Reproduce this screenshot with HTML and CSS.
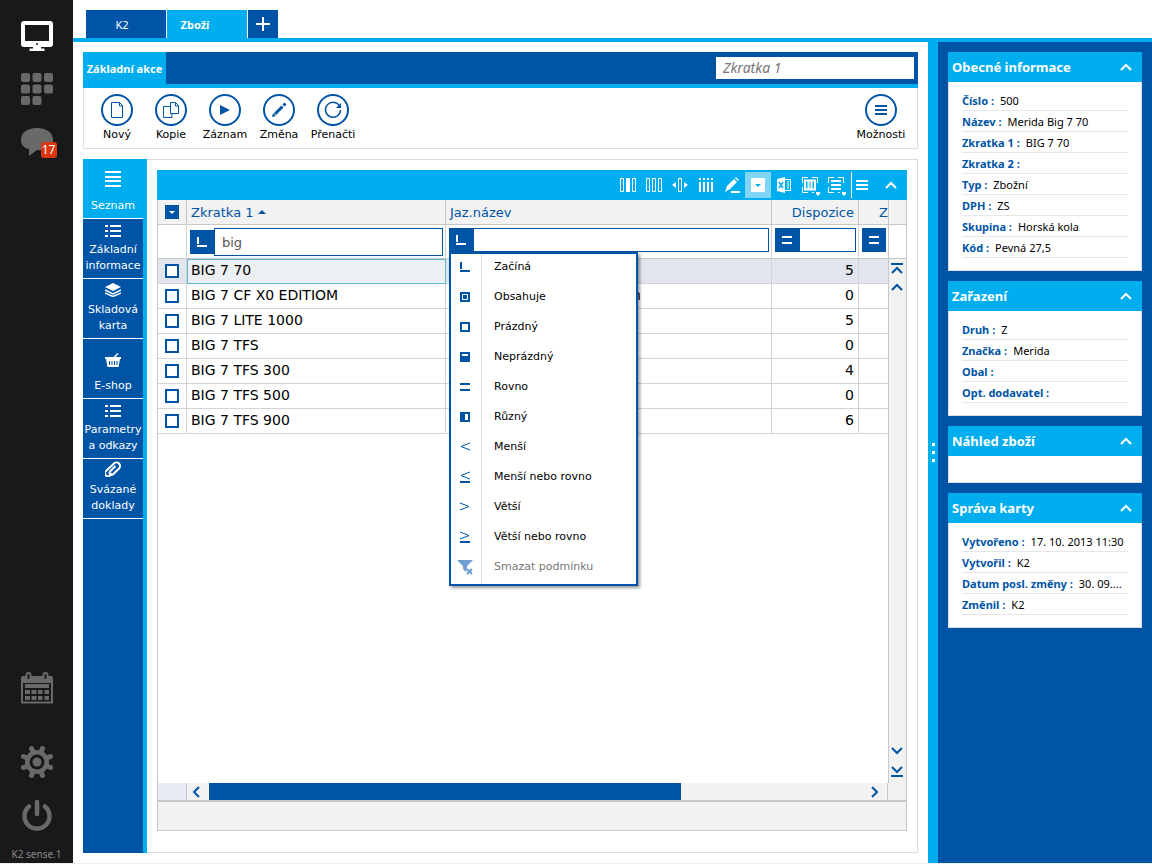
FILE: index.html
```html
<!DOCTYPE html>
<html lang="cs">
<head>
<meta charset="utf-8">
<title>K2 – Zboží</title>
<link rel="stylesheet" href="styles.css">
</head>
<body>
<svg class="defs" aria-hidden="true">
  <symbol id="up" viewBox="0 0 12 8"><path d="M1 7l5-5 5 5" fill="none" stroke="currentColor" stroke-width="2"/></symbol>
  <symbol id="down" viewBox="0 0 12 8"><path d="M1 1l5 5 5-5" fill="none" stroke="currentColor" stroke-width="2"/></symbol>
  <symbol id="list" viewBox="0 0 16 12"><path d="M0 1h3M5 1h11M0 6h3M5 6h11M0 11h3M5 11h11" stroke="currentColor" stroke-width="2"/></symbol>
  <symbol id="begins" viewBox="0 0 10 10"><path d="M1 0v7M0 9h10" fill="none" stroke="currentColor" stroke-width="2"/></symbol>
  <symbol id="equals" viewBox="0 0 10 10"><path d="M0 2h10M0 8h10" stroke="currentColor" stroke-width="2"/></symbol>
</svg>
<div class="app">
  <nav class="rail" aria-label="Hlavní panel">
    <button class="rail-btn on" aria-label="Plocha"><svg viewBox="0 0 32 32"><path fill-rule="evenodd" fill="currentColor" d="M3 1h26a3 3 0 0 1 3 3v20a3 3 0 0 1-3 3h-9v1.500h3.500V31h-15v-2.500H12V27H3a3 3 0 0 1-3-3V4a3 3 0 0 1 3-3zM4 5v16h24V5zm12 18a1 1 0 1 0 0 2 1 1 0 0 0 0-2z"/></svg></button>
    <button class="rail-btn" aria-label="Moduly"><svg viewBox="0 0 32 32" fill="currentColor"><rect width="9" height="9" rx="2"/><rect x="11.500" width="9" height="9" rx="2"/><rect x="23" width="9" height="9" rx="2"/><rect y="11.500" width="9" height="9" rx="2"/><rect x="11.500" y="11.500" width="9" height="9" rx="2"/><rect x="23" y="11.500" width="9" height="9" rx="2"/><rect y="23" width="9" height="9" rx="2"/><rect x="11.500" y="23" width="9" height="9" rx="2"/></svg></button>
    <button class="rail-btn" aria-label="Zprávy"><svg viewBox="0 0 32 32"><path fill="currentColor" d="M16 2c9 0 16 4 16 12s-7 11-16 10l-8 6v-7C3 22 0 19 0 14 0 6 7 2 16 2z"/></svg><span class="badge">17</span></button>
    <button class="rail-btn low" aria-label="Kalendář"><svg viewBox="0 0 32 32"><path fill="none" stroke="currentColor" stroke-width="2" d="M1 10h30v20.500H1z"/><path fill="currentColor" d="M0 6a2 2 0 0 1 2-2h28a2 2 0 0 1 2 2v4H0zM4 12h24v4H4zM4 18h5v4H4zM10.500 18h5v4h-5zM17 18h4.500v4H17zM23.500 18H28v4h-4.500zM4 24h5v4H4zM10.500 24h5v4h-5zM17 24h4.500v4H17zM23.500 24H28v4h-4.500z"/><path d="M7.500 5V3M24.500 5V3" stroke="currentColor" stroke-width="6" stroke-linecap="round"/><path d="M7.500 6V3M24.500 6V3" stroke="#191919" stroke-width="2" stroke-linecap="round"/></svg></button>
    <button class="rail-btn gear" aria-label="Nastavení"><svg viewBox="0 0 32 32"><path d="M10.500 2.500l11 27M21.500 2.500l-11 27M2.500 10.500l27 11M2.500 21.500l27-11" stroke="currentColor" stroke-width="5" stroke-linecap="round"/><circle cx="16" cy="16" r="12" fill="currentColor"/><circle cx="16" cy="16" r="7.500" fill="#191919"/><circle cx="16" cy="16" r="4.500" fill="currentColor"/></svg></button>
    <button class="rail-btn" aria-label="Odhlásit"><svg viewBox="0 0 32 32"><path d="M8 7.500a12.500 12.500 0 1 0 16 0M16 3v12" fill="none" stroke="currentColor" stroke-width="4.500" stroke-linecap="round"/></svg></button>
    <span class="rail-label">K2 sense.1</span>
  </nav>

  <div class="main">
    <div class="tabs">
      <button class="tab">K2</button><button class="tab current">Zboží</button><button class="tab add" aria-label="Nová záložka"><svg width="14" height="14" viewBox="0 0 14 14"><path d="M7 0v14M0 7h14" stroke="#fff" stroke-width="2"/></svg></button>
    </div>
    <div class="content">
      <main class="work">
        <section class="ribbon">
          <div class="ribbon-head">
            <button class="ribbon-tab">Základní akce</button>
            <input class="search" type="text" placeholder="Zkratka 1" aria-label="Hledat podle Zkratka 1">
          </div>
          <div class="ribbon-body">
            <button class="action"><span class="ring"><svg viewBox="0 0 32 32"><path d="M10.500 8.500h8l3 3v12h-11zM18.500 9v3h3" fill="none" stroke="currentColor"/></svg></span>Nový</button>
            <button class="action"><span class="ring"><svg viewBox="0 0 32 32"><path d="M15 12.500H8.500v11H17v-4M15.500 8.500h5l3 3v8h-8zM20.500 9v3h3" fill="none" stroke="currentColor"/></svg></span>Kopie</button>
            <button class="action"><span class="ring"><svg viewBox="0 0 32 32"><path d="M11 11l10 5-10 5z" fill="currentColor"/></svg></span>Záznam</button>
            <button class="action"><span class="ring"><svg viewBox="0 0 32 32"><path d="M12 20l7.500-7.500M20.500 11.500l2-2" stroke="currentColor" stroke-width="3"/><path d="M9 23l1-4 3 3z" fill="currentColor"/></svg></span>Změna</button>
            <button class="action"><span class="ring"><svg viewBox="0 0 32 32"><path d="M22.500 12A7.500 7.500 0 1 0 23.500 16" fill="none" stroke="currentColor" stroke-width="1.500"/><path d="M24 9v5h-5z" fill="currentColor"/></svg></span>Přenačti</button>
            <button class="action last"><span class="ring"><svg viewBox="0 0 32 32"><path d="M10 12h12M10 16h12M10 20h12" stroke="currentColor" stroke-width="2"/></svg></span>Možnosti</button>
          </div>
        </section>

        <div class="lower">
          <nav class="side" aria-label="Stránky">
            <button class="side-item current"><svg width="16" height="16" viewBox="0 0 16 16"><path d="M0 1h16M0 6h16M0 10h16M0 15h16" stroke="currentColor" stroke-width="2"/></svg><span>Seznam</span></button>
            <button class="side-item"><svg width="16" height="12"><use href="#list"/></svg><span>Základní informace</span></button>
            <button class="side-item"><svg width="16" height="14" viewBox="0 0 16 14"><path d="M8 0l8 4-8 4-8-4z" fill="currentColor"/><path d="M0 7l8 4 8-4M0 10l8 3.500 8-3.500" fill="none" stroke="currentColor" stroke-width="1.500"/></svg><span>Skladová karta</span></button>
            <button class="side-item single"><svg width="16" height="14" viewBox="0 0 16 14"><path d="M9 4.500L13 .5" stroke="currentColor" stroke-width="1.500"/><path fill="currentColor" fill-rule="evenodd" d="M0 4h16v2h-1l-1.500 8h-11L1 6H0zM4 8v4h1V8zm2.500 0v4h1V8zM9 8v4h1V8zm2.500 0v4h1V8z"/></svg><span>E-shop</span></button>
            <button class="side-item"><svg width="16" height="12"><use href="#list"/></svg><span>Parametry a odkazy</span></button>
            <button class="side-item"><svg width="16" height="16" viewBox="0 0 16 16"><path d="M5 10.500l5.500-5.500M7.500 12.500l-2.500 2a3 3 0 0 1-4-4.500L9 2.500a3.500 3.500 0 0 1 5 5l-5.500 5.500a2 2 0 0 1-3.500-2.500" fill="none" stroke="currentColor" stroke-width="2"/></svg><span>Svázané doklady</span></button>
          </nav>

          <section class="panel">
            <div class="grid">
              <div class="toolbar">
                <button class="tool" aria-label="Sloupce"><svg width="16" height="14" viewBox="0 0 16 14"><path d="M.5.5h3v13h-3zM12.500.5h3v13h-3z" fill="none" stroke="currentColor"/><path d="M6 0h4v14H6z" fill="currentColor"/></svg></button>
                <button class="tool" aria-label="Výběr sloupců"><svg width="16" height="14" viewBox="0 0 16 14"><path d="M.5.5h3v13h-3zM6.500.5h3v13h-3zM12.500.5h3v13h-3z" fill="none" stroke="currentColor"/></svg></button>
                <button class="tool" aria-label="Šířka sloupců"><svg width="16" height="14" viewBox="0 0 16 14"><path d="M6.500.5h3v13h-3z" fill="none" stroke="currentColor"/><path d="M4 4v6L0 7zM12 4v6l4-3z" fill="currentColor"/></svg></button>
                <button class="tool" aria-label="Součty"><svg width="16" height="14" viewBox="0 0 16 14"><path d="M2 0v2M6 0v2M10 0v2M14 0v2M2 4v10M6 4v10M10 4v10M14 4v10" stroke="currentColor" stroke-width="2"/></svg></button>
                <button class="tool" aria-label="Upravit"><svg width="16" height="16" viewBox="0 0 16 16"><path d="M3 9l7-7 3 3-7 7-5 3zM11 1l1-1 3 3-1 1zM7 14h9v2H7z" fill="currentColor"/></svg></button>
                <button class="tool pressed" aria-label="Filtr"><svg width="14" height="14" viewBox="0 0 14 14"><path d="M0 0h14v14H0z" fill="currentColor"/><path d="M4 6h6l-3 3z" fill="#00adef"/></svg></button>
                <button class="tool" aria-label="Export do Excelu"><svg width="16" height="16" viewBox="0 0 16 16"><path d="M1 2l8-2v16l-8-2z" fill="currentColor"/><path d="M3 5l4 6M7 5l-4 6" stroke="#00adef" stroke-width="1.500"/><path d="M9 2.500h5.500v11H9M12 4v8" fill="none" stroke="currentColor"/></svg></button>
                <button class="tool" aria-label="Uložené sloupce"><svg width="20" height="22" viewBox="-2 -3 20 22"><path d="M.5 6V.5H6M10 .5h5.500V6M.5 10v5.500H6M10 15.500h2" fill="none" stroke="currentColor"/><path d="M3 3.500h10v9H3zM6.500 4v8M9.500 4v8" fill="none" stroke="currentColor" stroke-width="2"/><path d="M14 15h4v2l-2 2-2-2z" fill="currentColor"/></svg></button>
                <button class="tool" aria-label="Uložené řádky"><svg width="20" height="22" viewBox="-2 -3 20 22"><path d="M.5 6V.5H6M10 .5h5.500V6M.5 10v5.500H6M10 15.500h2" fill="none" stroke="currentColor"/><path d="M3 4h10M3 8h10M3 12h10" stroke="currentColor" stroke-width="2"/><path d="M14 15h4v2l-2 2-2-2z" fill="currentColor"/></svg></button>
                <button class="tool menu-btn" aria-label="Nabídka"><svg width="12" height="10" viewBox="0 0 12 10"><path d="M0 1h12M0 5h12M0 9h12" stroke="currentColor" stroke-width="2"/></svg></button>
                <button class="tool fold" aria-label="Sbalit"><svg width="12" height="8"><use href="#up"/></svg></button>
              </div>
              <div class="grid-body">
                <div class="table-wrap">
                  <table>
                    <colgroup><col class="c-check"><col class="c-code"><col><col class="c-num"><col class="c-rest"></colgroup>
                    <thead>
                      <tr class="head">
                        <th><button class="pick" aria-label="Výběr záznamů"><svg width="6" height="3" viewBox="0 0 6 3"><path d="M0 0h6L3 3z" fill="#fff"/></svg></button></th>
                        <th>Zkratka 1 <svg width="8" height="4" viewBox="0 0 8 4"><path d="M0 4h8L4 0z" fill="currentColor"/></svg></th>
                        <th>Jaz.název</th>
                        <th class="num">Dispozice</th>
                        <th class="cut">Z</th>
                      </tr>
                      <tr class="filters">
                        <td></td>
                        <td><div class="filter active"><button aria-label="Podmínka: Začíná"><svg width="10" height="10"><use href="#begins"/></svg></button><input type="text" value="big" aria-label="Filtr Zkratka 1"></div></td>
                        <td><div class="filter"><button aria-label="Podmínka: Začíná" aria-expanded="true"><svg width="10" height="10"><use href="#begins"/></svg></button><input type="text" aria-label="Filtr Jaz.název">
                          <ul class="menu">
                            <li><button><svg viewBox="0 0 16 16"><path d="M4 3v7M3 12h10" stroke="currentColor" stroke-width="2"/></svg>Začíná</button></li>
                            <li><button><svg viewBox="0 0 16 16"><path d="M3 3h10v10H3z" fill="currentColor"/><path d="M5.500 5.500h5v5h-5z" fill="none" stroke="#fff"/></svg>Obsahuje</button></li>
                            <li><button><svg viewBox="0 0 16 16"><path d="M4 4h8v8H4z" fill="none" stroke="currentColor" stroke-width="2"/></svg>Prázdný</button></li>
                            <li><button><svg viewBox="0 0 16 16"><path d="M3 3h10v10H3z" fill="currentColor"/><path d="M5 6h6" stroke="#fff" stroke-width="2"/></svg>Neprázdný</button></li>
                            <li><button><svg viewBox="0 0 16 16"><path d="M3 5h10M3 11h10" stroke="currentColor" stroke-width="2"/></svg>Rovno</button></li>
                            <li><button><svg viewBox="0 0 16 16"><path d="M3 3h10v10H3z" fill="currentColor"/><path d="M8 5h3v6H8z" fill="#fff"/></svg>Různý</button></li>
                            <li><button><svg viewBox="0 0 16 16"><path d="M13 4L4 7.500l9 3.500" fill="none" stroke="currentColor"/></svg>Menší</button></li>
                            <li><button><svg viewBox="0 0 16 16"><path d="M13 3L4 6.500l9 3.500" fill="none" stroke="currentColor"/><path d="M3 13h10" stroke="currentColor" stroke-width="2"/></svg>Menší nebo rovno</button></li>
                            <li><button><svg viewBox="0 0 16 16"><path d="M3 4l9 3.500L3 11" fill="none" stroke="currentColor"/></svg>Větší</button></li>
                            <li><button><svg viewBox="0 0 16 16"><path d="M3 3l9 3.500L3 10" fill="none" stroke="currentColor"/><path d="M3 13h10" stroke="currentColor" stroke-width="2"/></svg>Větší nebo rovno</button></li>
                            <li><button disabled><svg viewBox="0 0 16 16"><path d="M0 1h16l-6 6v3l-1 3-3-3V7z" fill="currentColor"/><path d="M10 10l5 5M15 10l-5 5" stroke="currentColor" stroke-width="2"/></svg>Smazat podmínku</button></li>
                          </ul></div></td>
                        <td><div class="filter"><button aria-label="Podmínka: Rovno"><svg width="10" height="10"><use href="#equals"/></svg></button><input type="text" aria-label="Filtr Dispozice"></div></td>
                        <td><div class="filter"><button aria-label="Podmínka: Rovno"><svg width="10" height="10"><use href="#equals"/></svg></button></div></td>
                      </tr>
                    </thead>
                    <tbody>
                      <tr class="selected"><td><input type="checkbox" aria-label="BIG 7 70"></td><td class="focus">BIG 7 70</td><td></td><td class="num">5</td><td></td></tr>
                      <tr><td><input type="checkbox" aria-label="BIG 7 CF X0 EDITIOM"></td><td>BIG 7 CF X0 EDITIOM</td><td class="tail">n</td><td class="num">0</td><td></td></tr>
                      <tr><td><input type="checkbox" aria-label="BIG 7 LITE 1000"></td><td>BIG 7 LITE 1000</td><td></td><td class="num">5</td><td></td></tr>
                      <tr><td><input type="checkbox" aria-label="BIG 7 TFS"></td><td>BIG 7 TFS</td><td></td><td class="num">0</td><td></td></tr>
                      <tr><td><input type="checkbox" aria-label="BIG 7 TFS 300"></td><td>BIG 7 TFS 300</td><td></td><td class="num">4</td><td></td></tr>
                      <tr><td><input type="checkbox" aria-label="BIG 7 TFS 500"></td><td>BIG 7 TFS 500</td><td></td><td class="num">0</td><td></td></tr>
                      <tr><td><input type="checkbox" aria-label="BIG 7 TFS 900"></td><td>BIG 7 TFS 900</td><td></td><td class="num">6</td><td></td></tr>
                    </tbody>
                  </table>
                </div>
                <div class="vscroll">
                  <div class="corner-head"></div><div class="corner-filter"></div>
                  <div class="vtrack">
                    <button aria-label="Na začátek"><svg width="12" height="11" viewBox="0 0 12 11"><path d="M0 1h12M1 10l5-5 5 5" fill="none" stroke="currentColor" stroke-width="2"/></svg></button>
                    <button aria-label="Nahoru"><svg width="12" height="8"><use href="#up"/></svg></button>
                    <button class="to-end" aria-label="Dolů"><svg width="12" height="8"><use href="#down"/></svg></button>
                    <button aria-label="Na konec"><svg width="12" height="11" viewBox="0 0 12 11"><path d="M0 10h12M1 1l5 5 5-5" fill="none" stroke="currentColor" stroke-width="2"/></svg></button>
                  </div>
                </div>
              </div>
              <div class="hscroll">
                <span class="hlead"></span>
                <button aria-label="Vlevo"><svg width="8" height="12" viewBox="0 0 8 12"><path d="M7 1L2 6l5 5" fill="none" stroke="currentColor" stroke-width="2"/></svg></button>
                <span class="htrack"><span class="thumb"></span></span>
                <button aria-label="Vpravo"><svg width="8" height="12" viewBox="0 0 8 12"><path d="M2 1l5 5-5 5" fill="none" stroke="currentColor" stroke-width="2"/></svg></button>
                <span class="hcorner"></span>
              </div>
              <div class="grid-foot"></div>
            </div>
          </section>
        </div>
      </main>

      <div class="splitter"><i></i><i></i><i></i></div>

      <aside class="info">
        <section class="card">
          <h2>Obecné informace <svg width="12" height="8"><use href="#up"/></svg></h2>
          <dl>
            <div><dt>Číslo :</dt><dd>500</dd></div>
            <div><dt>Název :</dt><dd>Merida Big 7 70</dd></div>
            <div><dt>Zkratka 1 :</dt><dd>BIG 7 70</dd></div>
            <div><dt>Zkratka 2 :</dt><dd></dd></div>
            <div><dt>Typ :</dt><dd>Zbožní</dd></div>
            <div><dt>DPH :</dt><dd>ZS</dd></div>
            <div><dt>Skupina :</dt><dd>Horská kola</dd></div>
            <div><dt>Kód :</dt><dd>Pevná 27,5</dd></div>
          </dl>
        </section>
        <section class="card">
          <h2>Zařazení <svg width="12" height="8"><use href="#up"/></svg></h2>
          <dl>
            <div><dt>Druh :</dt><dd>Z</dd></div>
            <div><dt>Značka :</dt><dd>Merida</dd></div>
            <div><dt>Obal :</dt><dd></dd></div>
            <div><dt>Opt. dodavatel :</dt><dd></dd></div>
          </dl>
        </section>
        <section class="card">
          <h2>Náhled zboží <svg width="12" height="8"><use href="#up"/></svg></h2>
          <div class="preview"></div>
        </section>
        <section class="card">
          <h2>Správa karty <svg width="12" height="8"><use href="#up"/></svg></h2>
          <dl>
            <div><dt>Vytvořeno :</dt><dd>17. 10. 2013 11:30</dd></div>
            <div><dt>Vytvořil :</dt><dd>K2</dd></div>
            <div><dt>Datum posl. změny :</dt><dd>30. 09....</dd></div>
            <div><dt>Změnil :</dt><dd>K2</dd></div>
          </dl>
        </section>
      </aside>
    </div>
  </div>
</div>
</body>
</html>
```
FILE: styles.css
```css
:root {
  --blue: #0054a6;
  --sky: #00adef;
  --line: #dcdcdc;
  --rule: #c8c8c8;
  --ui: "Noto Sans", "Open Sans", sans-serif;
  --wide: "DejaVu Sans", sans-serif;
}
* { box-sizing: border-box; }
body { margin: 0; font: 11px/16px var(--ui); color: #000; background: #fff; }
button { margin: 0; padding: 0; border: 0; background: none; font: inherit; color: inherit; cursor: pointer; }
input { margin: 0; font: inherit; }
svg { display: block; flex: none; }
.defs { position: absolute; width: 0; height: 0; }

.app { display: flex; height: 100vh; border-bottom: 1px solid #eee; }

/* left rail */
.rail { display: flex; flex-direction: column; align-items: center; gap: 21px; width: 73px; padding-top: 20px; background: #191919; color: #696969; }
.rail-btn { position: relative; width: 32px; height: 32px; }
.rail-btn.on { color: #fff; }
.rail-btn.low { margin-top: auto; }
.rail-btn.gear { margin-top: 21px; }
.badge { position: absolute; left: 20px; top: 16px; width: 16px; height: 16px; border-radius: 3px; background: #d9370f; color: #fff; font-size: 12px; }
.rail-label { margin-top: -6px; font-size: 10px; line-height: 17px; color: #8a8a8a; }

/* tabs */
.main { display: flex; flex: 1; flex-direction: column; min-width: 0; }
.tabs { display: flex; gap: 1px; height: 42px; padding: 10px 13px 0; border-bottom: 4px solid var(--sky); }
.tab { width: 80px; padding: 2px 8px 0 0; background: var(--blue); color: #fff; }
.tab.current { padding-right: 24px; background: var(--sky); font-weight: 700; }
.tab.add { display: flex; align-items: center; justify-content: center; width: 30px; padding: 0; }
.content { display: flex; flex: 1; min-height: 0; }
.work { display: flex; flex: 1; flex-direction: column; gap: 10px; min-width: 0; padding: 10px; }

/* ribbon */
.ribbon-head { display: flex; align-items: center; justify-content: space-between; height: 36px; padding-right: 4px; background: var(--blue); border-bottom: 4px solid var(--sky); }
.ribbon-tab { align-self: stretch; width: 83px; padding-top: 2px; background: var(--sky); color: #fff; font-weight: 700; }
.search { width: 198px; height: 22px; padding: 0 7px 2px; border: 0; font-size: 14px; font-style: italic; }
.search::placeholder { color: #777; }
.ribbon-body { display: flex; height: 61px; padding: 6px 9px 0 6px; border: 1px solid var(--line); border-top: 0; }
.action { display: flex; flex-direction: column; align-items: center; width: 54px; font: 11px/18px var(--wide); }
.action.last { margin-left: auto; }
.ring { width: 32px; height: 32px; border: 2px solid var(--blue); border-radius: 50%; color: var(--blue); }
.ring svg { margin: -2px; width: 32px; height: 32px; }

/* page navigation */
.lower { display: flex; flex: 1; min-height: 0; }
.side { display: flex; flex-direction: column; width: 64px; background: var(--blue); border-right: 4px solid var(--sky); color: #fff; font: 11px/16px var(--wide); }
.side-item { display: flex; flex-direction: column; align-items: center; justify-content: flex-end; gap: 5px; height: 60px; padding-bottom: 4px; border-bottom: 1px solid #fff; }
.side-item.current { gap: 11px; background: var(--sky); }
.side-item.single { gap: 11px; }

/* grid */
.panel { display: flex; flex: 1; min-width: 0; padding: 10px 10px 21px; border: 1px solid var(--line); border-left: 0; }
.grid { display: flex; flex: 1; flex-direction: column; min-width: 0; border: 1px solid var(--rule); border-top: 0; }
.toolbar { display: flex; justify-content: flex-end; align-items: center; height: 30px; margin: 0 -1px; background: var(--sky); color: #fff; }
.tool { display: flex; align-items: center; justify-content: center; width: 26px; height: 26px; }
.tool.pressed { background: #7fd6f7; }
.tool.menu-btn { width: 24px; padding-right: 3px; border-left: 1px solid #fff; margin-left: 2px; }
.tool.fold { width: 32px; }
.grid-body { display: flex; flex: 1; min-height: 0; }
.table-wrap { flex: 1; min-width: 0; overflow: hidden; }
table { width: 100%; table-layout: fixed; border-collapse: separate; border-spacing: 0; font: 14px/20px var(--wide); }
.c-check { width: 29px; }
.c-code { width: 259px; }
.c-num { width: 87px; }
.c-rest { width: 29px; }
th, td { padding: 0 4px; border-right: 1px solid #d4d4d4; border-bottom: 1px solid #d4d4d4; text-align: left; white-space: nowrap; }
th:last-child, td:last-child { border-right: 0; }
th { height: 25px; padding-top: 2px; background: #f2f2f2; border-color: var(--rule); color: var(--blue); font-size: 13px; font-weight: 400; }
th svg { display: inline-block; vertical-align: 3px; }
th:first-child, tbody td:first-child { padding: 0 7px; }
.num { text-align: right; }
th.cut { padding-right: 0; text-align: right; }
.pick { display: flex; align-items: center; justify-content: center; width: 14px; height: 14px; background: var(--blue); }
.pick svg { display: block; }
.filters td { height: 34px; padding: 3px 2px 2px 3px; border-bottom-color: var(--rule); font-size: 13px; vertical-align: top; }
.filter { position: relative; display: flex; height: 24px; }
.filter > button { display: flex; flex: none; align-items: center; justify-content: center; width: 24px; height: 24px; background: var(--blue); color: #fff; }
.filter > input { flex: 1; min-width: 0; padding: 0 7px; border: 1px solid var(--blue); outline: 0; color: #555; }
.filter.active { height: 28px; align-items: center; }
.filter.active > input { height: 28px; }
tbody td { height: 25px; padding-bottom: 2px; }
tbody input { display: block; appearance: none; width: 14px; height: 14px; border: 2px solid var(--blue); background: #fff; }
.tail { padding-left: 186px; }
.selected td { background: #e1e6ee; }
.selected .focus { background: #edf0f3; outline: 1px solid #62b8cc; outline-offset: -1px; }

/* condition menu */
.menu { position: absolute; left: 0; top: 24px; z-index: 2; width: 189px; margin: 0; padding: 0; list-style: none; background: linear-gradient(90deg, transparent 30px, #dcdcdc 30px, #dcdcdc 31px, transparent 31px) #fff; border: 2px solid var(--blue); box-shadow: 2px 2px 3px #0006; font: 11px/16px var(--wide); }
.menu button { display: flex; align-items: center; gap: 21px; width: 100%; height: 30px; padding: 0 6px 4px; }
.menu svg { width: 16px; height: 16px; color: var(--blue); }
.menu button:disabled { color: #777; }
.menu button:disabled svg { color: #6f9fd0; }

/* scroll bars */
.vscroll { display: flex; flex-direction: column; width: 18px; border-left: 1px solid var(--rule); background: #f2f2f2; color: var(--blue); }
.corner-head { height: 25px; border-bottom: 1px solid var(--rule); }
.corner-filter { height: 34px; background: #fff; border-bottom: 1px solid var(--rule); }
.vtrack { display: flex; flex: 1; flex-direction: column; padding: 0 2px 2px 0; }
.vtrack button { display: flex; align-items: center; justify-content: center; height: 20px; }
.vtrack button:first-child { height: 18px; }
.vtrack .to-end { margin-top: auto; }
.hscroll { display: flex; height: 17px; background: #f2f2f2; color: var(--blue); }
.hscroll button { display: flex; align-items: center; justify-content: center; width: 22px; padding-right: 4px; }
.hlead { width: 29px; background: #e6ebf5; border-right: 1px solid var(--rule); }
.htrack { flex: 1; }
.thumb { display: block; width: 72%; height: 17px; background: var(--blue); }
.hcorner { width: 19px; border-left: 1px solid var(--rule); }
.grid-foot { height: 30px; background: #f2f2f2; border-top: 2px solid var(--rule); }

/* splitter and info cards */
.splitter { display: flex; flex-direction: column; align-items: center; justify-content: center; gap: 5px; width: 10px; background: var(--sky); }
.splitter i { width: 3px; height: 3px; background: #fff; }
.info { display: flex; flex-direction: column; gap: 10px; width: 214px; padding: 10px; background: var(--blue); }
.card { background: #fff; }
.card h2 { display: flex; align-items: center; justify-content: space-between; height: 30px; margin: 0; padding: 0 10px 0 4px; background: var(--sky); color: #fff; font-size: 13px; line-height: 20px; font-weight: 700; }
.card dl { margin: 0; padding: 8px 13px 12px; border: 1px solid var(--line); border-top: 0; }
.card dl div { display: flex; gap: 6px; height: 21px; border-bottom: 1px solid #e6e6e6; line-height: 22px; white-space: nowrap; }
.card dt { color: var(--blue); font-weight: 700; }
.card dd { margin: 0; }
.preview { height: 27px; border: 1px solid var(--line); border-top: 0; }
```
